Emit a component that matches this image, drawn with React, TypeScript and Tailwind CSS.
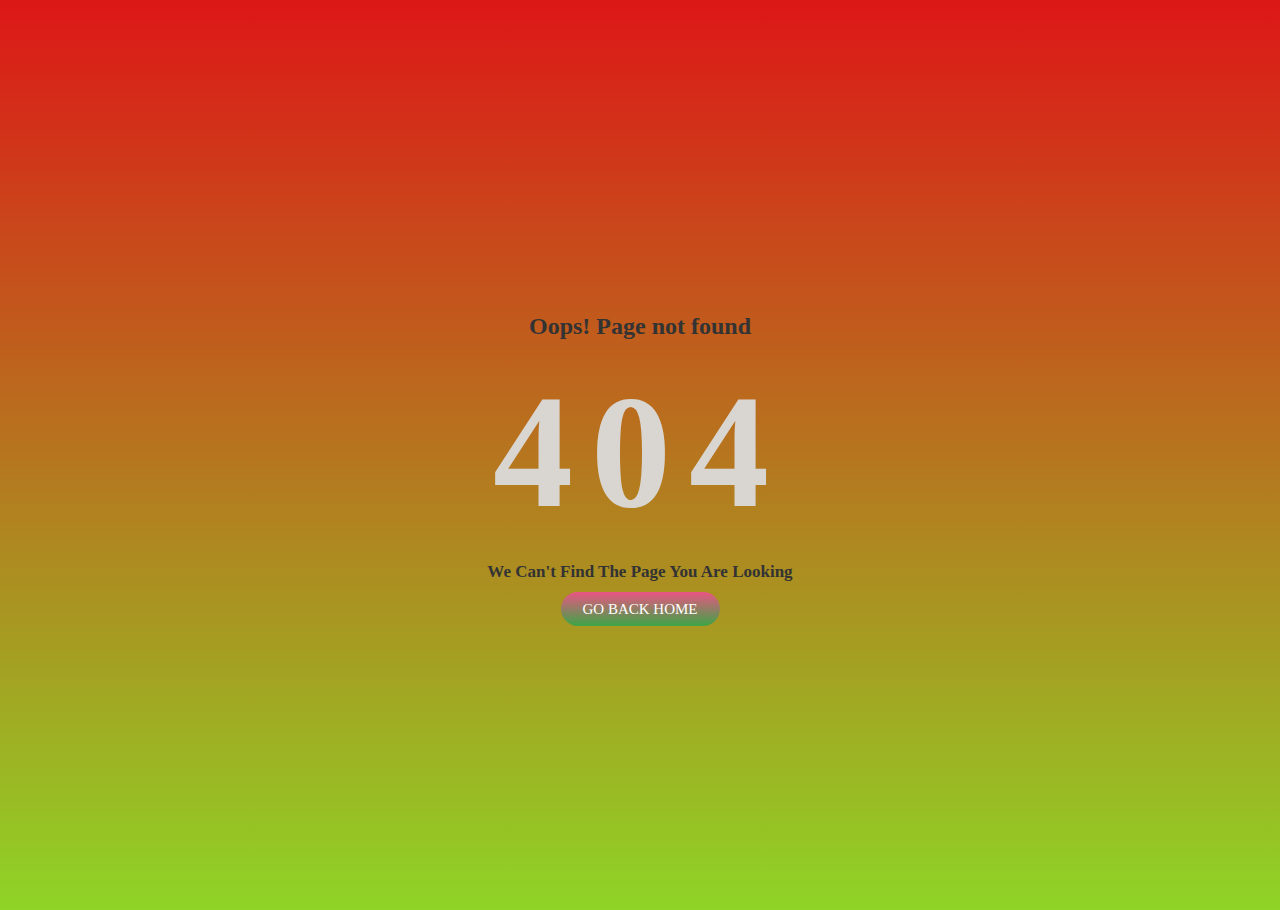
export default function App() {
  return (
    <div className="h-[910px] w-full bg-[linear-gradient(to_bottom,#dd1717,#8fd426)] flex flex-col items-center justify-center pt-[28px] font-['Liberation_Serif',serif] text-center">
      <h3 className="text-[24px] font-bold text-[#333] leading-[28px]">Oops! Page not found</h3>
      <h1 className="text-[160px] font-bold leading-[160px] tracking-[18px] text-[#d9d6d2] mt-[32px]">404</h1>
      <h2 className="text-[17px] font-bold text-[#333] leading-[20px] mt-[30px]">We Can't Find The Page You Are Looking</h2>
      <button className="mt-[10px] h-[34px] w-[159px] rounded-full bg-[linear-gradient(to_bottom,#ea5583,#3ca546)] text-white text-[15px] leading-[34px]">
        GO BACK HOME
      </button>
    </div>
  );
}
